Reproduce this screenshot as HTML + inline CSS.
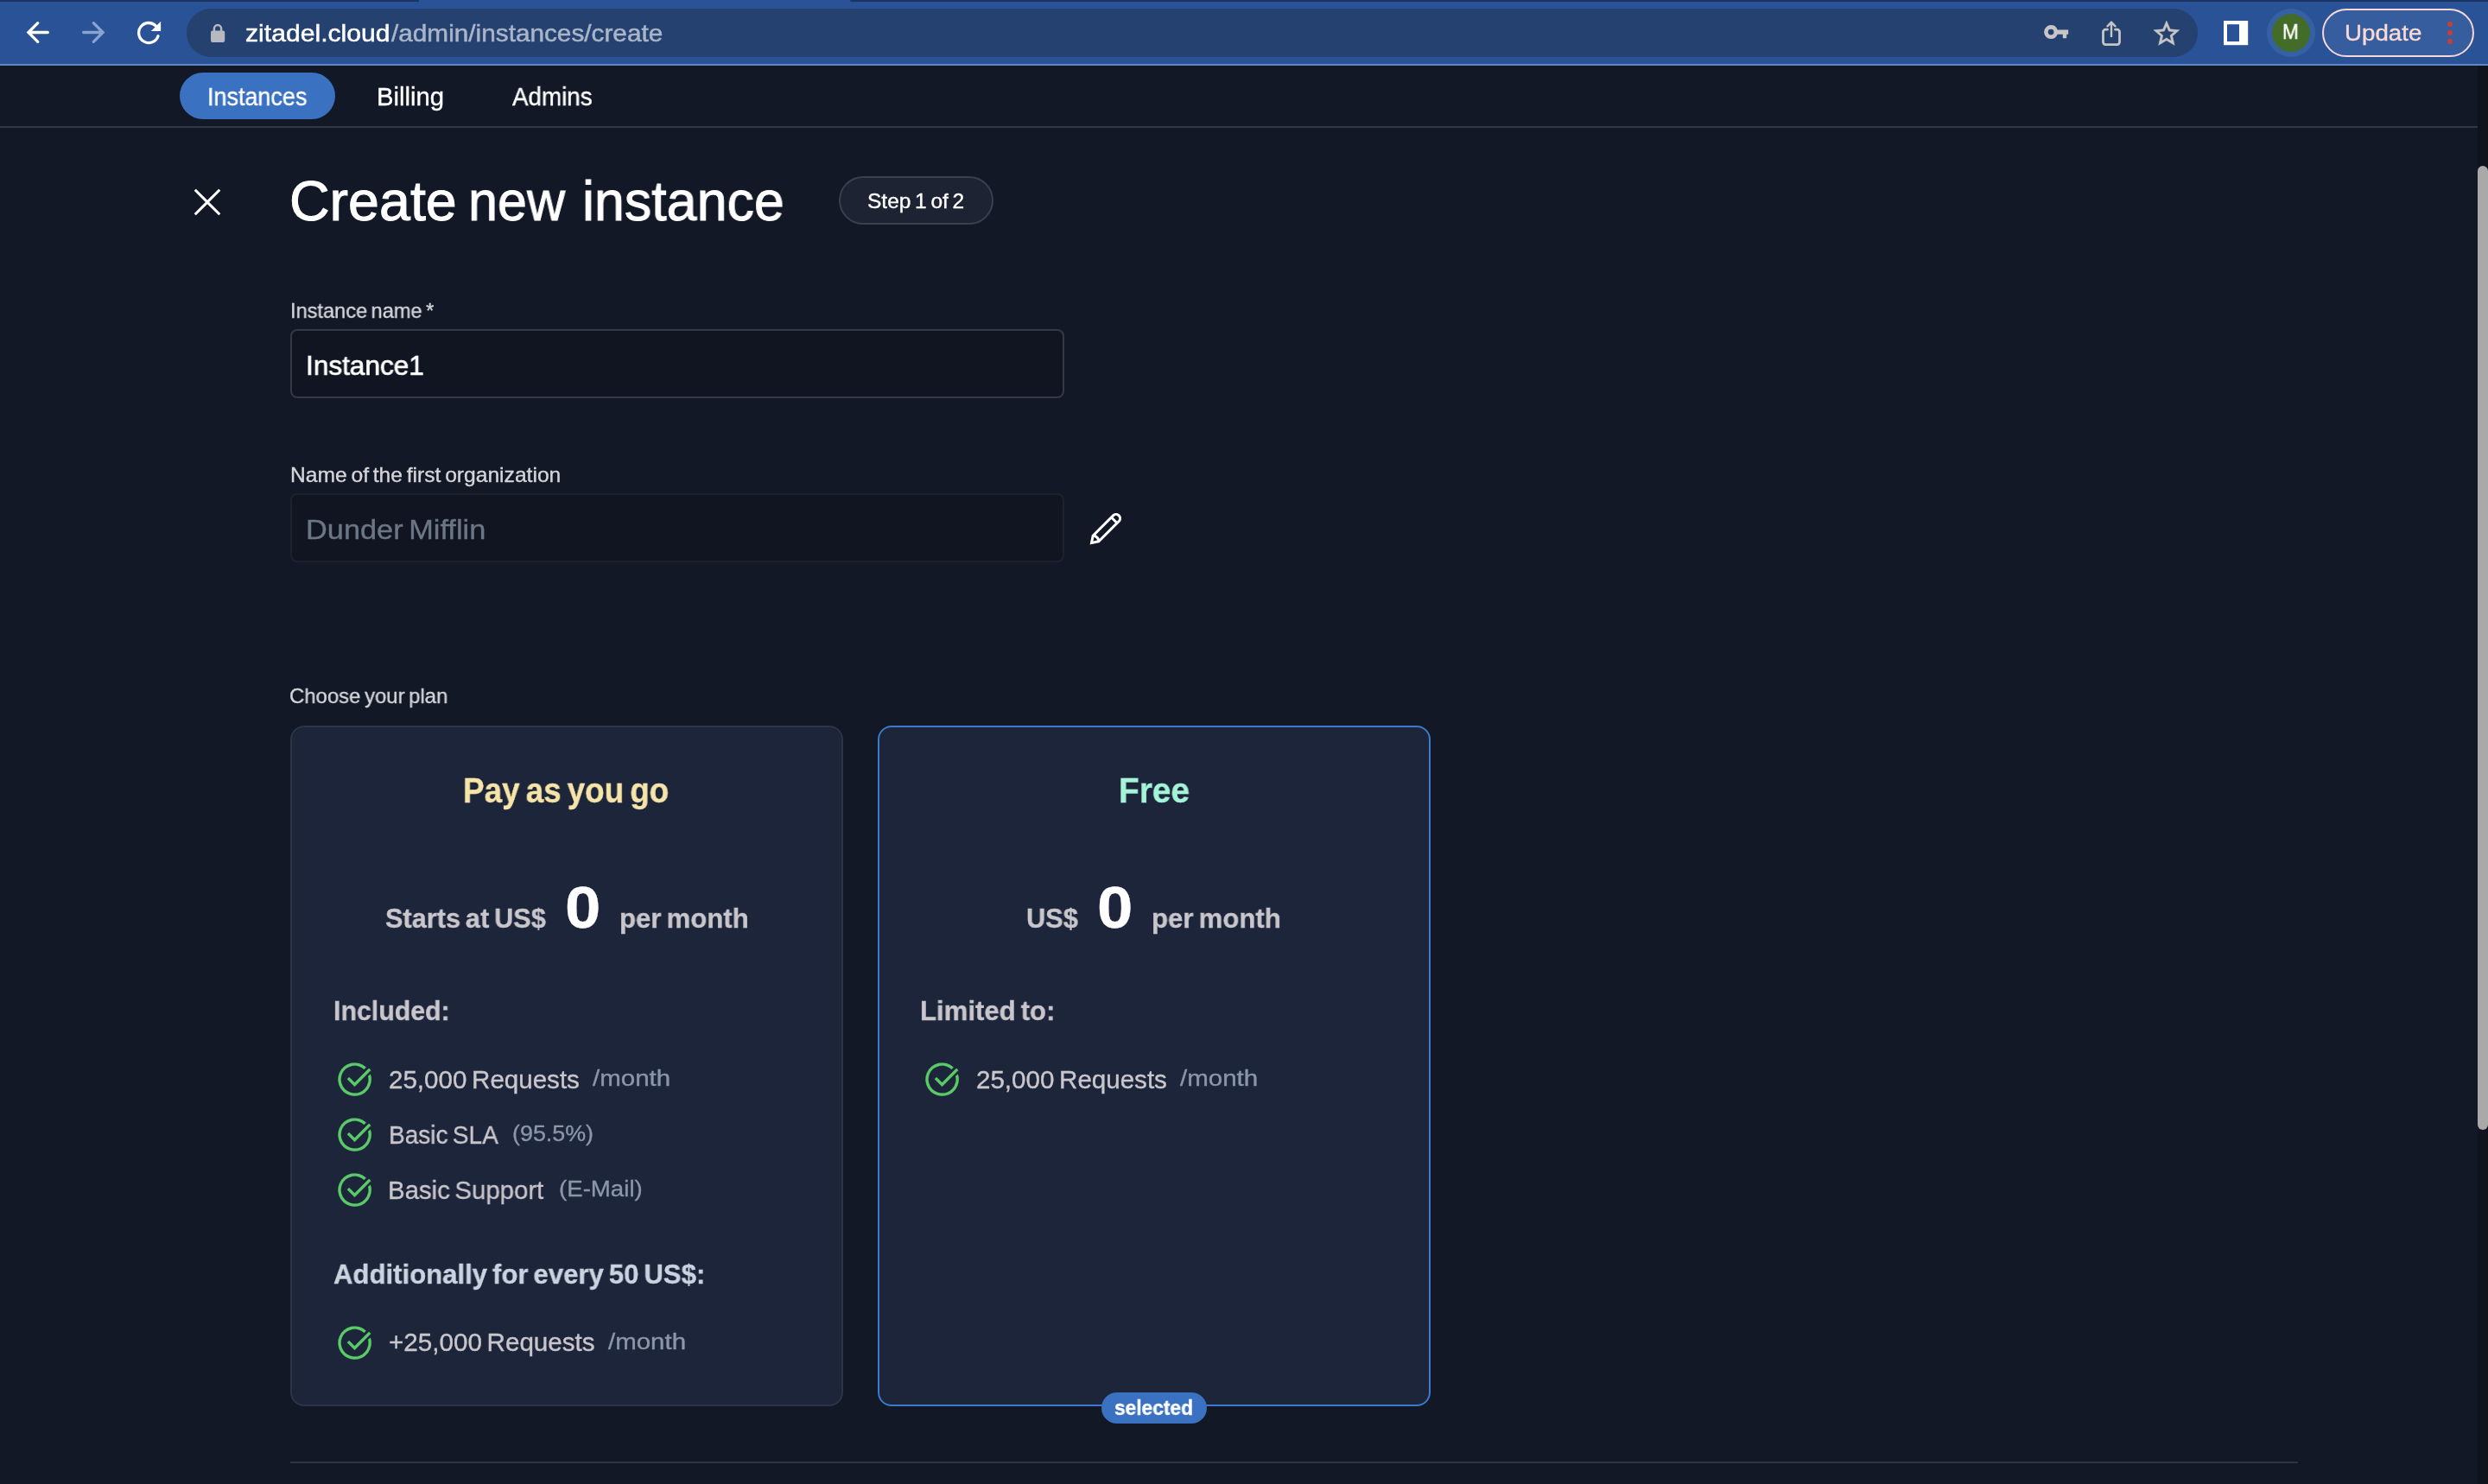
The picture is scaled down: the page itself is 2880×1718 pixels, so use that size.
<!DOCTYPE html>
<html lang="en"><head><meta charset="utf-8"><title>ZITADEL Cloud - Create new instance</title>
<style>
*{margin:0;padding:0;box-sizing:border-box}
html,body{width:2880px;height:1718px;overflow:hidden;background:#121826;font-family:"Liberation Sans", sans-serif}
#root{position:relative;width:2880px;height:1718px;overflow:hidden;background:#121826}
.a,.t,.ic{position:absolute}
.t{line-height:1;white-space:nowrap;transform-origin:0 50%;display:block;will-change:transform;-webkit-text-stroke:.35px;word-spacing:-0.085em}
#toolbar{left:0;top:0;width:2880px;height:74px;background:#295297}
#tbline{left:0;top:74px;width:2880px;height:2px;background:#5e87c4}
.strip{top:0;height:2px;background:#1c3461}
#omni{left:216px;top:10px;width:2328px;height:56px;border-radius:28px;background:#244170}
#navline{left:0;top:146px;width:2868px;height:2px;background:#323746}
#navpill{left:208px;top:84px;width:180px;height:54px;border-radius:27px;background:#3a71c1}
#track{left:2868px;top:76px;width:12px;height:1642px;background:#10131e}
#thumb{left:2868px;top:192px;width:12px;height:1115.5px;border-radius:6px;background:#a9a9a9}
#steppill{left:971px;top:204px;width:179px;height:56px;border-radius:28px;border:2px solid #3a3f4e;background:#1e2333}
.inp{left:336px;width:896px;height:80px;border-radius:8px;background:#111521}
#in1{top:381px;border:2px solid #343947}
#in2{top:571px;border:2px solid #1f222c}
.card{top:840px;width:640px;height:788px;border-radius:16px;background:#1c253a}
#card1{left:336px;border:2px solid #2e3445}
#card2{left:1016px;border:2px solid #3d79cd}
#selpill{left:1275.2px;top:1612px;width:121.5px;height:36px;border-radius:18px;background:#3a71c1}
#botline{left:336px;top:1692px;width:2324px;height:2px;background:#2e3444}
#avhalo{left:2624px;top:10px;width:56px;height:56px;border-radius:50%;background:#3660a4}
#avatar{left:2630px;top:16px;width:44px;height:44px;border-radius:50%;background:#426c28}
#updpill{left:2688px;top:10px;width:176px;height:56px;border-radius:28px;border:2px solid #f6d9d6;background:#365d9e}
.dot{left:2832.7px;width:6px;height:6px;border-radius:50%;background:#c93e31}
</style></head><body><div id="root">
<header id="chrome">
<div class="a" id="toolbar"></div><div class="a" id="tbline"></div>
<div class="a strip" style="left:0;width:485px"></div><div class="a strip" style="left:984px;width:1896px;border-bottom-left-radius:2px"></div>
<div class="a" id="omni"></div>
<svg class="ic" style="left:20px;top:10px" width="180" height="60" viewBox="20 10 180 60" fill="none" stroke-linecap="round" stroke-linejoin="miter"><path stroke="#fff" stroke-width="3.3" d="M55.3 37.5H33.8M43.7 26.7L32.9 37.5L43.7 48.3"/><path stroke="#8ba4cf" stroke-width="3.3" d="M96.7 37.5H118.2M108.3 26.7L119.1 37.5L108.3 48.3"/><path stroke="#fff" stroke-width="3.3" d="M180.3 29.9A11.5 11.5 0 1 0 183.0 41.7"/><path fill="#fff" stroke="none" d="M186.1 24.8V35.9H174.9Z"/></svg>
<svg class="ic" style="left:240px;top:24px" width="24" height="28" viewBox="240 24 24 28"><rect x="244" y="35.4" width="16.2" height="13.6" rx="2" fill="#b6b9bf"/><path d="M247.9 36V33.2a4.1 4.1 0 0 1 8.2 0V36" fill="none" stroke="#b6b9bf" stroke-width="2.5"/></svg>
<span class="t" id="url1" style="left:284.39px;top:24.60px;font-size:28px;font-weight:400;color:#ffffff;transform:scaleX(1.0769);-webkit-text-stroke:0.5px;">zitadel.cloud</span><span class="t" id="url2" style="left:452.87px;top:24.60px;font-size:28px;font-weight:400;color:#aab5c9;transform:scaleX(1.0628);-webkit-text-stroke:0.5px;">/admin/instances/create</span>
<svg class="ic" style="left:2360px;top:24px" width="40" height="26" viewBox="2360 24 40 26"><path fill="#c6c6c6" fill-rule="evenodd" d="M2374.1 29.1a8 8 0 1 0 0 16a8 8 0 0 0 7.5-5.3h6.2v4.4h4.4v-4.4h2v-5.4h-12.6a8 8 0 0 0-7.5-5.3zm0 4.6a3.4 3.4 0 1 1 0 6.8a3.4 3.4 0 0 1 0-6.8z"/></svg>
<svg class="ic" style="left:2428px;top:20px" width="32" height="36" viewBox="2428 20 32 36" fill="none" stroke="#c6c6c6" stroke-width="2.8" stroke-linecap="round" stroke-linejoin="round"><path d="M2439.5 34.2h-2.2a2.8 2.8 0 0 0-2.8 2.8v11.8a2.8 2.8 0 0 0 2.8 2.8h13.4a2.8 2.8 0 0 0 2.8-2.8V37a2.8 2.8 0 0 0-2.8-2.8h-2.2"/><path stroke-width="2.4" d="M2444 42V25.8M2439.5 30.3l4.5-4.6 4.5 4.6"/></svg>
<svg class="ic" style="left:2490.1px;top:20.6px" width="35.8" height="35.8" viewBox="0 0 24 24"><path fill="#c6c6c6" stroke="#c6c6c6" stroke-width=".35" d="M22 9.24l-7.19-.62L12 2 9.19 8.63 2 9.24l5.46 4.73L5.82 21 12 17.27 18.18 21l-1.63-7.03L22 9.24zM12 15.4l-3.76 2.27 1-4.28-3.32-2.88 4.38-.38L12 6.1l1.71 4.04 4.38.38-3.32 2.88 1 4.28L12 15.4z"/></svg>
<svg class="ic" style="left:2574px;top:23.8px" width="29" height="29" viewBox="0 0 29 29"><rect width="28.2" height="28.2" fill="#fff"/><rect x="4" y="4.2" width="14" height="19.8" fill="#295297"/></svg>
<div class="a" id="avhalo"></div><div class="a" id="avatar"></div><span class="t" id="avm" style="left:2641.84px;top:26.11px;font-size:23.5px;font-weight:400;color:#ffffff;transform:scaleX(0.9625);">M</span>
<div class="a" id="updpill"></div><span class="t" id="upd" style="left:2714.02px;top:24.97px;font-size:26.5px;font-weight:400;color:#fadad6;transform:scaleX(1.0452);">Update</span>
<div class="a dot" style="top:25.4px"></div><div class="a dot" style="top:35px"></div><div class="a dot" style="top:44.8px"></div>
</header>
<nav><div class="a" id="navpill"></div><span class="t" id="nav1" style="left:240.02px;top:97.85px;font-size:29px;font-weight:400;color:#ffffff;transform:scaleX(0.9293);">Instances</span><span class="t" id="nav2" style="left:436.21px;top:97.85px;font-size:29px;font-weight:400;color:#ffffff;transform:scaleX(1.0091);">Billing</span><span class="t" id="nav3" style="left:593.38px;top:97.85px;font-size:29px;font-weight:400;color:#ffffff;transform:scaleX(0.9576);">Admins</span><div class="a" id="navline"></div></nav>
<div class="a" id="track"></div><div class="a" id="thumb"></div>
<main>
<svg class="ic" style="left:216px;top:210px" width="48" height="48" viewBox="0 0 32 32"><path fill="#fff" d="M 7.21875 5.78125 L 5.78125 7.21875 L 14.5625 16 L 5.78125 24.78125 L 7.21875 26.21875 L 16 17.4375 L 24.78125 26.21875 L 26.21875 24.78125 L 17.4375 16 L 26.21875 7.21875 L 24.78125 5.78125 L 16 14.5625 Z"/></svg>
<h1><span class="t" id="title1" style="left:335.38px;top:201.42px;font-size:64px;font-weight:400;color:#ffffff;transform:scaleX(1.0085);-webkit-text-stroke:1.0px;">Create</span> <span class="t" id="title2" style="left:541.97px;top:201.42px;font-size:64px;font-weight:400;color:#ffffff;transform:scaleX(0.9544);-webkit-text-stroke:1.0px;">new</span> <span class="t" id="title3" style="left:674.38px;top:201.42px;font-size:64px;font-weight:400;color:#ffffff;transform:scaleX(0.9810);-webkit-text-stroke:1.0px;">instance</span></h1>
<div class="a" id="steppill"></div><span class="t" id="step" style="left:1004.05px;top:220.78px;font-size:24px;font-weight:400;color:#ffffff;transform:scaleX(1.0203);">Step 1 of 2</span>
<label><span class="t" id="lab1" style="left:335.67px;top:347.58px;font-size:24px;font-weight:400;color:#d6d6da;transform:scaleX(0.9819);">Instance name *</span></label><div class="a inp" id="in1"></div><span class="t" id="inp1" style="left:354.27px;top:406.61px;font-size:32px;font-weight:400;color:#ffffff;transform:scaleX(0.9853);-webkit-text-stroke:0.7px;">Instance1</span>
<label><span class="t" id="lab2" style="left:336.10px;top:537.58px;font-size:24px;font-weight:400;color:#d6d6da;transform:scaleX(1.0261);">Name of the first organization</span></label><div class="a inp" id="in2"></div><span class="t" id="inp2" style="left:353.72px;top:596.81px;font-size:32px;font-weight:400;color:#6c7786;transform:scaleX(1.0728);">Dunder Mifflin</span>
<svg class="ic" style="left:1256px;top:587.7px" width="48" height="48" viewBox="0 0 32 32"><path fill="#fff" d="M 23.90625 3.96875 C 22.859375 3.96875 21.8125 4.375 21 5.1875 L 5.1875 21 L 5.125 21.3125 L 4.03125 26.8125 L 3.71875 28.28125 L 5.1875 27.96875 L 10.6875 26.875 L 11 26.8125 L 26.8125 11 C 28.4375 9.375 28.4375 6.8125 26.8125 5.1875 C 26 4.375 24.953125 3.96875 23.90625 3.96875 Z M 23.90625 5.875 C 24.410156 5.875 24.917969 6.105469 25.40625 6.59375 C 26.378906 7.566406 26.378906 8.621094 25.40625 9.59375 L 24.6875 10.28125 L 21.71875 7.3125 L 22.40625 6.59375 C 22.894531 6.105469 23.402344 5.875 23.90625 5.875 Z M 20.3125 8.71875 L 23.28125 11.6875 L 11.1875 23.78125 C 10.53125 22.5 9.5 21.46875 8.21875 20.8125 Z M 6.9375 22.4375 C 8.136719 22.921875 9.078125 23.863281 9.5625 25.0625 L 6.28125 25.71875 Z"/></svg>
<span class="t" id="choose" style="left:335.17px;top:794.36px;font-size:24.5px;font-weight:400;color:#d6d6da;transform:scaleX(0.9758);">Choose your plan</span>
<section><div class="a card" id="card1"></div>
<h2><span class="t" id="p1t" style="left:536.18px;top:895.44px;font-size:40px;font-weight:700;color:#f6e4a8;transform:scaleX(0.9207);">Pay as you go</span></h2><span class="t" id="p1a" style="left:445.65px;top:1046.71px;font-size:32px;font-weight:700;color:#c9c6cc;transform:scaleX(0.9590);">Starts at US$</span><span class="t" id="p1z" style="left:654.26px;top:1016.34px;font-size:68px;font-weight:700;color:#ffffff;transform:scaleX(1.0940);">0</span><span class="t" id="p1m" style="left:716.76px;top:1046.71px;font-size:32px;font-weight:700;color:#c9c6cc;transform:scaleX(0.9736);">per month</span>
<h3><span class="t" id="inc" style="left:385.77px;top:1154.31px;font-size:32px;font-weight:700;color:#c9c6cc;transform:scaleX(0.9468);">Included:</span></h3>
<svg class="ic" style="left:384.60px;top:1224.30px" width="51.2" height="51.2" viewBox="0 0 32 32"><path fill="#5bcb68" stroke="#5bcb68" stroke-width=".15" d="M27.42 12.31A12 12 0 1 1 24.18 7.22L22.82 8.69A10 10 0 1 0 25.7 13.58ZM26.28 7.98L15.95 18.31L11.97 14.33L10.53 15.77L15.95 21.19L27.72 9.42Z"/></svg><span class="t" id="r1" style="left:449.95px;top:1234.88px;font-size:29.5px;font-weight:400;color:#c9c6cc;transform:scaleX(1.0015);">25,000 Requests</span><span class="t" id="r1s" style="left:686.19px;top:1235.29px;font-size:26px;font-weight:400;color:#8b97a8;transform:scaleX(1.1352);">/month</span>
<svg class="ic" style="left:384.60px;top:1288.40px" width="51.2" height="51.2" viewBox="0 0 32 32"><path fill="#5bcb68" stroke="#5bcb68" stroke-width=".15" d="M27.42 12.31A12 12 0 1 1 24.18 7.22L22.82 8.69A10 10 0 1 0 25.7 13.58ZM26.28 7.98L15.95 18.31L11.97 14.33L10.53 15.77L15.95 21.19L27.72 9.42Z"/></svg><span class="t" id="r2" style="left:449.63px;top:1298.88px;font-size:29.5px;font-weight:400;color:#c9c6cc;transform:scaleX(0.9492);">Basic SLA</span><span class="t" id="r2s" style="left:592.59px;top:1299.29px;font-size:26px;font-weight:400;color:#8b97a8;transform:scaleX(1.0332);">(95.5%)</span>
<svg class="ic" style="left:384.60px;top:1352.40px" width="51.2" height="51.2" viewBox="0 0 32 32"><path fill="#5bcb68" stroke="#5bcb68" stroke-width=".15" d="M27.42 12.31A12 12 0 1 1 24.18 7.22L22.82 8.69A10 10 0 1 0 25.7 13.58ZM26.28 7.98L15.95 18.31L11.97 14.33L10.53 15.77L15.95 21.19L27.72 9.42Z"/></svg><span class="t" id="r3" style="left:449.44px;top:1362.88px;font-size:29.5px;font-weight:400;color:#c9c6cc;transform:scaleX(0.9950);">Basic Support</span><span class="t" id="r3s" style="left:647.26px;top:1363.29px;font-size:26px;font-weight:400;color:#8b97a8;transform:scaleX(1.0631);">(E-Mail)</span>
<h3><span class="t" id="add" style="left:386.16px;top:1458.71px;font-size:32px;font-weight:700;color:#c9d4e0;transform:scaleX(0.9721);">Additionally for every 50 US$:</span></h3>
<svg class="ic" style="left:384.60px;top:1528.70px" width="51.2" height="51.2" viewBox="0 0 32 32"><path fill="#5bcb68" stroke="#5bcb68" stroke-width=".15" d="M27.42 12.31A12 12 0 1 1 24.18 7.22L22.82 8.69A10 10 0 1 0 25.7 13.58ZM26.28 7.98L15.95 18.31L11.97 14.33L10.53 15.77L15.95 21.19L27.72 9.42Z"/></svg><span class="t" id="r4" style="left:449.58px;top:1539.28px;font-size:29.5px;font-weight:400;color:#c9c6cc;transform:scaleX(1.0036);">+25,000 Requests</span><span class="t" id="r4s" style="left:704.20px;top:1539.69px;font-size:26px;font-weight:400;color:#8b97a8;transform:scaleX(1.1334);">/month</span>
</section>
<section><div class="a card" id="card2"></div>
<h2><span class="t" id="p2t" style="left:1294.79px;top:895.04px;font-size:40px;font-weight:700;color:#a5f4d8;transform:scaleX(0.9710);">Free</span></h2><span class="t" id="p2a" style="left:1188.18px;top:1046.71px;font-size:32px;font-weight:700;color:#c9c6cc;transform:scaleX(0.9624);">US$</span><span class="t" id="p2z" style="left:1269.93px;top:1016.34px;font-size:68px;font-weight:700;color:#ffffff;transform:scaleX(1.0940);">0</span><span class="t" id="p2m" style="left:1333.45px;top:1046.71px;font-size:32px;font-weight:700;color:#c9c6cc;transform:scaleX(0.9742);">per month</span>
<h3><span class="t" id="lim" style="left:1064.86px;top:1154.31px;font-size:32px;font-weight:700;color:#c9c6cc;transform:scaleX(0.9724);">Limited to:</span></h3>
<svg class="ic" style="left:1064.60px;top:1224.30px" width="51.2" height="51.2" viewBox="0 0 32 32"><path fill="#5bcb68" stroke="#5bcb68" stroke-width=".15" d="M27.42 12.31A12 12 0 1 1 24.18 7.22L22.82 8.69A10 10 0 1 0 25.7 13.58ZM26.28 7.98L15.95 18.31L11.97 14.33L10.53 15.77L15.95 21.19L27.72 9.42Z"/></svg><span class="t" id="q1" style="left:1129.95px;top:1234.88px;font-size:29.5px;font-weight:400;color:#c9c6cc;transform:scaleX(1.0015);">25,000 Requests</span><span class="t" id="q1s" style="left:1366.19px;top:1235.29px;font-size:26px;font-weight:400;color:#8b97a8;transform:scaleX(1.1352);">/month</span>
<div class="a" id="selpill"></div><span class="t" id="sel" style="left:1290.45px;top:1617.68px;font-size:24px;font-weight:700;color:#ffffff;transform:scaleX(0.9466);">selected</span>
</section>
<div class="a" id="botline"></div>
</main></div></body></html>
